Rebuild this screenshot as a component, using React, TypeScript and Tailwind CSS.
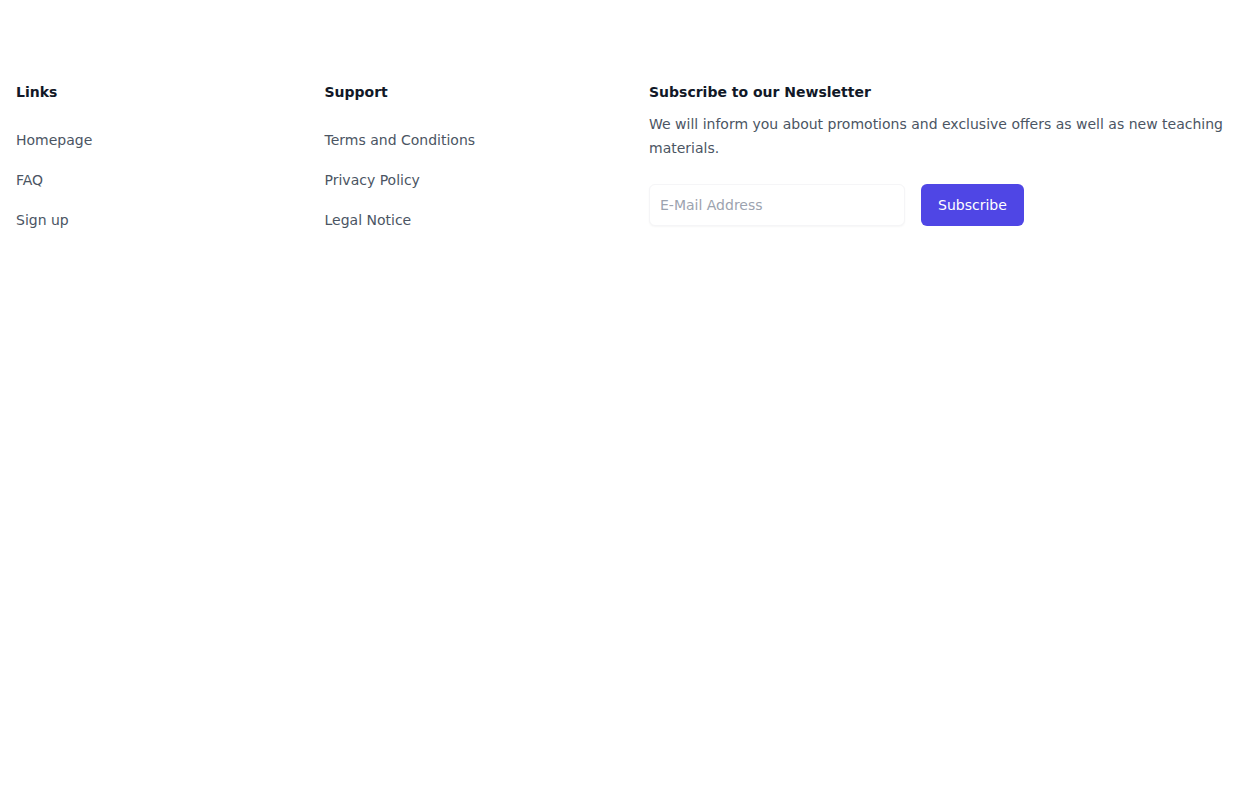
const links = ["Homepage", "FAQ", "Sign up"];
const support = ["Terms and Conditions", "Privacy Policy", "Legal Notice"];

function LinkColumn({ title, items }: { title: string; items: string[] }) {
  return (
    <div>
      <h3 className="text-sm font-semibold leading-6 text-[#111827]">{title}</h3>
      <ul className="mt-6 space-y-4">
        {items.map((item) => (
          <li key={item}>
            <a href="#" className="text-sm leading-6 text-[#4b5563] hover:text-[#111827]">
              {item}
            </a>
          </li>
        ))}
      </ul>
    </div>
  );
}

export default function App() {
  return (
    <footer className="bg-white font-['DejaVu_Sans',sans-serif]">
      <div className="px-4 pt-20 pb-16">
        <div className="grid grid-cols-2 gap-12">
          <div className="grid grid-cols-2 gap-8">
            <LinkColumn title="Links" items={links} />
            <LinkColumn title="Support" items={support} />
          </div>
          <div>
            <h3 className="text-sm font-semibold leading-6 text-[#111827]">
              Subscribe to our Newsletter
            </h3>
            <p className="mt-2 text-sm leading-6 text-[#4b5563]">
              We will inform you about promotions and exclusive offers as well as new teaching
              materials.
            </p>
            <form className="mt-6 flex gap-4" onSubmit={(e) => e.preventDefault()}>
              <input
                type="email"
                placeholder="E-Mail Address"
                className="w-64 rounded-md border border-[#f5f5f7] bg-white px-2.5 py-2.5 text-sm leading-5 text-[#111827] shadow-[0_1px_2px_rgba(0,0,0,0.04)] outline-none placeholder:text-[#9ca3af]"
              />
              <button
                type="submit"
                className="rounded-md bg-[#4f46e5] px-[17px] text-sm text-white hover:bg-[#6366f1]"
              >
                Subscribe
              </button>
            </form>
          </div>
        </div>
      </div>
    </footer>
  );
}
